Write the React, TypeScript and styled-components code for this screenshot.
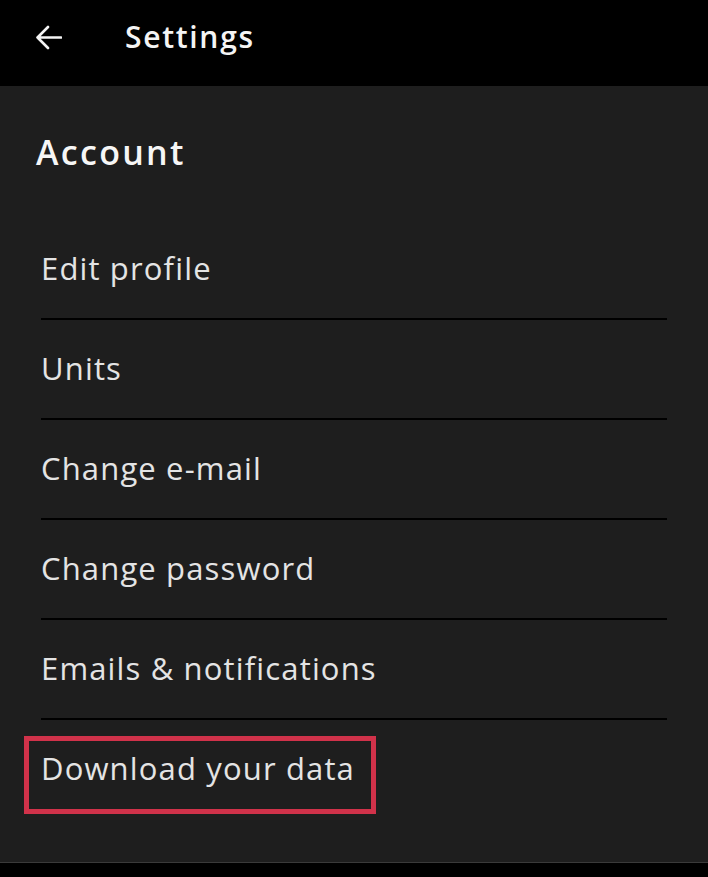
import React from "react";
import styled, { createGlobalStyle } from "styled-components";

const Global = createGlobalStyle`
  html, body { margin: 0; padding: 0; background: #000; }
  * { box-sizing: border-box; }
`;

const Page = styled.div`
  width: 708px;
  height: 877px;
  display: flex;
  flex-direction: column;
  font-family: "Open Sans", "Liberation Sans", sans-serif;
  background: #000;
`;

const Header = styled.header`
  height: 86px;
  flex: 0 0 86px;
  background: #000;
  display: flex;
  align-items: center;
  padding-left: 35px;
  gap: 63px;
`;

const BackButton = styled.button`
  all: unset;
  width: 27px;
  height: 25px;
  display: flex;
  margin-top: -11px;
  cursor: pointer;
`;

const Title = styled.h1`
  margin: -12px 0 0 0;
  font-size: 30px;
  line-height: 30px;
  font-weight: 600;
  color: #f4f4f4;
  letter-spacing: 1.7px;
`;

const Content = styled.main`
  flex: 1;
  background: #1e1e1e;
  padding-top: 50px;
  display: flex;
  flex-direction: column;
`;

const SectionTitle = styled.h2`
  margin: 0 0 51px 36px;
  font-size: 34px;
  line-height: 33px;
  font-weight: 600;
  color: #f6f6f6;
  letter-spacing: 2.3px;
`;

const List = styled.ul`
  list-style: none;
  margin: 0 41px;
  padding: 0;
`;

const Item = styled.li<{ $last?: boolean }>`
  position: relative;
  padding: 33px 0 ${(p) => (p.$last ? "36px" : "34px")};
  border-bottom: ${(p) => (p.$last ? "none" : "2px solid #000")};
  font-size: 31px;
  line-height: 31px;
  color: #e4e4e4;
  letter-spacing: 1.15px;
`;

const Highlight = styled.span`
  position: absolute;
  left: -17px;
  top: 16px;
  width: 352px;
  height: 78px;
  border: 5px solid #d1324a;
  pointer-events: none;
`;

const Footer = styled.div`
  flex: 0 0 15px;
  background: #000;
  border-top: 1px solid #3a3a3a;
`;

const items = [
  "Edit profile",
  "Units",
  "Change e-mail",
  "Change password",
  "Emails & notifications",
  "Download your data",
];

export default function App() {
  return (
    <>
      <Global />
      <Page>
        <Header>
          <BackButton aria-label="Back">
            <svg width="27" height="25" viewBox="0 0 27 25" fill="none">
              <path
                d="M26 12.5H2.5M13 2L2.5 12.5L13 23"
                stroke="#f4f4f4"
                strokeWidth="2.6"
                strokeLinecap="round"
                strokeLinejoin="round"
              />
            </svg>
          </BackButton>
          <Title>Settings</Title>
        </Header>
        <Content>
          <SectionTitle>Account</SectionTitle>
          <List>
            {items.map((t, i) => {
              const last = i === items.length - 1;
              return (
                <Item key={t} $last={last}>
                  {t}
                  {last && <Highlight />}
                </Item>
              );
            })}
          </List>
        </Content>
        <Footer />
      </Page>
    </>
  );
}
